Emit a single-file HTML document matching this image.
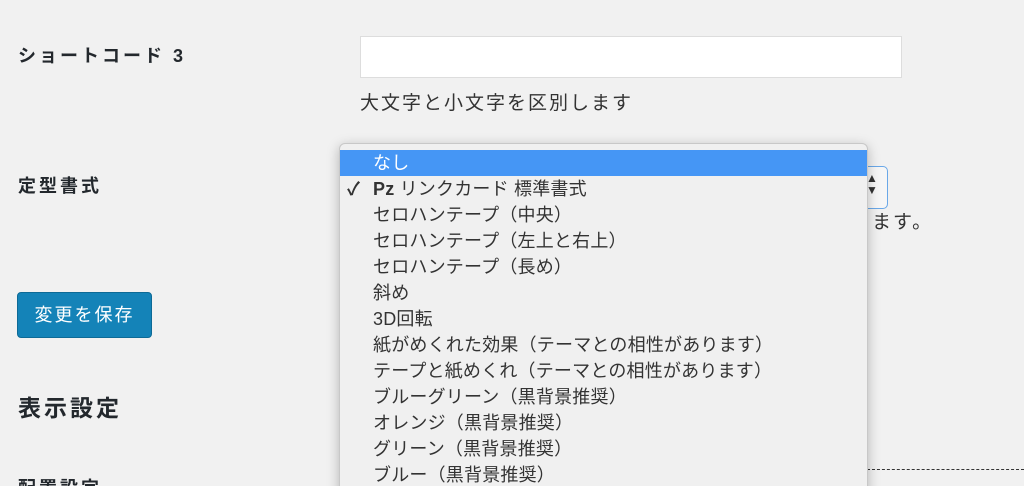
<!DOCTYPE html>
<html><head><meta charset="utf-8"><style>
html,body{margin:0;padding:0;width:1024px;height:486px;overflow:hidden;background:#f1f1f1;font-family:"Liberation Sans","Noto Sans CJK JP",sans-serif;color:#23282d;position:relative}
.a{position:absolute;white-space:nowrap}
.lbl{font-weight:bold;font-size:18px;letter-spacing:3px}
.menu{position:absolute;left:339px;top:143px;width:527px;height:360px;background:#f0f0f0;border:1px solid #c8c8c8;border-radius:6px;box-shadow:0 3px 12px rgba(0,0,0,.25);overflow:hidden}
.it{height:26px;line-height:26px;font-size:18px;padding-left:33px;color:#333;position:relative;letter-spacing:.2px}
.sel{background:#4596f5;color:#fff;margin-top:6px}
</style></head><body>
<div class="a lbl" style="left:18px;top:42px">ショートコード 3</div>
<div class="a" style="left:360px;top:36px;width:540px;height:40px;background:#fff;border:1px solid #ddd"></div>
<div class="a" style="left:360px;top:88px;font-size:19px;letter-spacing:2px;color:#333">大文字と小文字を区別します</div>
<div class="a lbl" style="left:18px;top:172px">定型書式</div>
<div class="a" style="left:840px;top:166px;width:46px;height:41px;border:1px solid #6aa8e8;border-radius:5px;background:#f6f6f6"></div>
<div class="a" style="left:866px;top:172px;font-size:12px;line-height:12px;color:#333">▲<br>▼</div>
<div class="a" style="left:851px;top:207px;font-size:19px;letter-spacing:2px;color:#333">ります。</div>
<div class="a" style="left:17px;top:292px;width:133px;height:44px;background:#1483b8;border:1px solid #0d6a96;border-radius:4px;color:#fff;font-size:18px;letter-spacing:2px;line-height:44px;text-align:center">変更を保存</div>
<div class="a" style="left:18px;top:389px;font-size:23px;letter-spacing:3px;font-weight:bold">表示設定</div>
<div class="a lbl" style="left:18px;top:474px">配置設定</div>
<div class="a" style="left:867px;top:469px;width:157px;border-top:1px dashed #333"></div>
<div class="menu">
<div class="it sel">なし</div>
<div class="it"><span style="position:absolute;left:7px;font-weight:bold">✓</span><b>Pz</b> リンクカード 標準書式</div>
<div class="it">セロハンテープ（中央）</div>
<div class="it">セロハンテープ（左上と右上）</div>
<div class="it">セロハンテープ（長め）</div>
<div class="it">斜め</div>
<div class="it">3D回転</div>
<div class="it">紙がめくれた効果（テーマとの相性があります）</div>
<div class="it">テープと紙めくれ（テーマとの相性があります）</div>
<div class="it">ブルーグリーン（黒背景推奨）</div>
<div class="it">オレンジ（黒背景推奨）</div>
<div class="it">グリーン（黒背景推奨）</div>
<div class="it">ブルー（黒背景推奨）</div>
</div>
</body></html>
